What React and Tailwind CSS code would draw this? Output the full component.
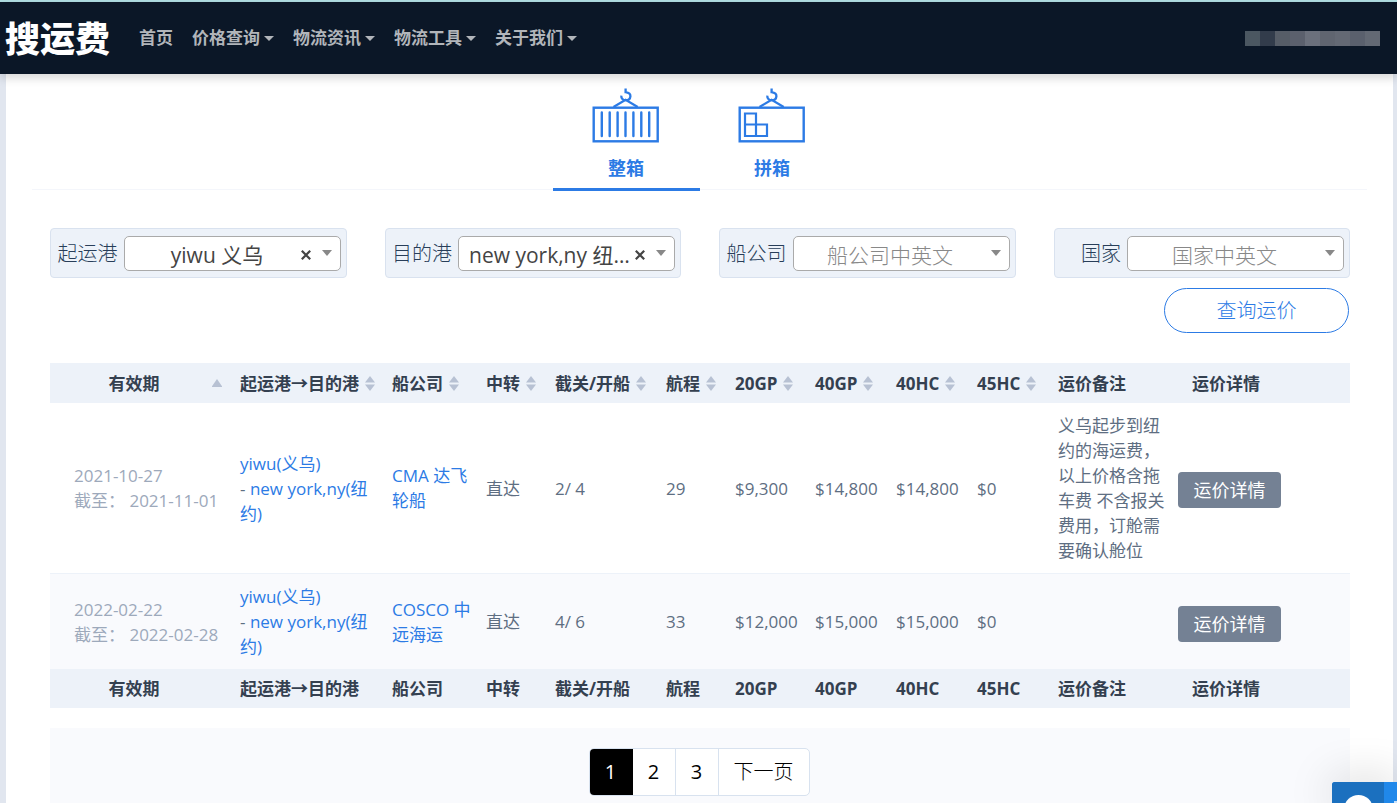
import React, { useState } from "react";

const navItems = [
  { label: "首页", menu: false },
  { label: "价格查询", menu: true },
  { label: "物流资讯", menu: true },
  { label: "物流工具", menu: true },
  { label: "关于我们", menu: true },
];

const columns = [
  { label: "有效期", width: "w-[184px]", sort: "up" },
  { label: "起运港→目的港", width: "w-[152px]", sort: "both" },
  { label: "船公司", width: "w-[94px]", sort: "both" },
  { label: "中转", width: "w-[69px]", sort: "both" },
  { label: "截关/开船", width: "w-[111px]", sort: "both" },
  { label: "航程", width: "w-[69px]", sort: "both" },
  { label: "20GP", width: "w-[80px]", sort: "both" },
  { label: "40GP", width: "w-[81px]", sort: "both" },
  { label: "40HC", width: "w-[81px]", sort: "both" },
  { label: "45HC", width: "w-[81px]", sort: "both" },
  { label: "运价备注", width: "w-[120px]", sort: null },
  { label: "运价详情", width: "w-auto", sort: null },
];

const rates = [
  {
    from: "2021-10-27",
    to: "2021-11-01",
    carrier: "CMA 达飞轮船",
    transit: "直达",
    cutoff: "2/ 4",
    days: "29",
    prices: ["$9,300", "$14,800", "$14,800", "$0"],
    note: "义乌起步到纽约的海运费，以上价格含拖车费 不含报关费用，订舱需要确认舱位",
  },
  {
    from: "2022-02-22",
    to: "2022-02-28",
    carrier: "COSCO 中远海运",
    transit: "直达",
    cutoff: "4/ 6",
    days: "33",
    prices: ["$12,000", "$15,000", "$15,000", "$0"],
    note: "",
  },
];

function Hook() {
  return (
    <>
      <path d="M33.6 .6V4.2C36.600 4.600 38.500 6.200 38.400 8.300C38.200 10.800 36.200 12.200 33.600 12.200C31 12.200 29.100 10.400 29.300 7.600" strokeWidth="2.3" />
      <path d="M21.5 19L33.600 11.800L45.700 19" strokeWidth="2.2" />
    </>
  );
}

function FullContainerIcon() {
  return (
    <svg width="68" height="56" viewBox="0 0 68 56" fill="none" stroke="currentColor" aria-hidden="true">
      <Hook />
      <rect x="1.7" y="19.7" width="64" height="33.6" strokeWidth="2.4" />
      <path d="M9.8 24.500V48M17.700 24.500V48M25.600 24.500V48M33.500 24.500V48M41.400 24.500V48M49.300 24.500V48M57.200 24.500V48" strokeWidth="2.4" strokeLinecap="round" />
    </svg>
  );
}

function SharedContainerIcon() {
  return (
    <svg width="68" height="56" viewBox="0 0 68 56" fill="none" stroke="currentColor" aria-hidden="true">
      <Hook />
      <rect x="1.7" y="19.7" width="64" height="33.6" strokeWidth="2.4" />
      <path d="M7 25.500H18V36.500H29V48H7ZM7 36.500H18V48" strokeWidth="2.2" />
    </svg>
  );
}

function SortMark({ kind }) {
  return (
    <svg className="shrink-0 text-[#b7c1d3]" width="10" height="15" viewBox="0 0 10 15" fill="currentColor" aria-hidden="true">
      {kind === "up" ? (
        <path d="M5 3L10.5 11H-.5Z" />
      ) : (
        <>
          <path d="M5 0L10 6.5H0Z" />
          <path d="M0 8.5H10L5 15Z" />
        </>
      )}
    </svg>
  );
}

function Filter({ id, label, value, placeholder }) {
  const [current, setCurrent] = useState(value || "");
  return (
    <div className="flex h-[50px] items-center justify-end rounded-[4px] border border-[#d9e2ef] bg-[#edf2f9] px-[5px]">
      <label htmlFor={id} className="whitespace-nowrap pr-1.5 pt-0.5 text-xl font-light text-[#283e59]">{label}</label>
      <div className="flex h-[35px] w-[217px] items-center rounded-[5px] border border-[#aaa] bg-white pr-2">
        <select
          id={id}
          value={current}
          onChange={(e) => setCurrent(e.target.value)}
          className={
            current
              ? "h-full min-w-0 flex-1 appearance-none truncate bg-transparent pl-2.5 pt-1 text-center text-[21px] leading-7 text-[#444] outline-none"
              : "h-full min-w-0 flex-1 appearance-none truncate bg-transparent pl-2.5 pr-1 pt-1 text-center text-[21px] font-light leading-7 text-[#888] outline-none"
          }
        >
          <option value="">{placeholder}</option>
          {value && <option value={value}>{value}</option>}
        </select>
        {current && (
          <button type="button" aria-label="清除" onClick={() => setCurrent("")} className="flex h-6 w-3 shrink-0 items-center justify-center pt-1 text-[#444]">
            <svg width="10" height="10" viewBox="0 0 10 10" stroke="currentColor" strokeWidth="2.2" aria-hidden="true">
              <path d="M.8 .8L9.2 9.2M9.2 .8L.8 9.2" />
            </svg>
          </button>
        )}
        <svg className="ml-2.5 shrink-0 text-[#888]" width="10" height="6" viewBox="0 0 10 6" fill="currentColor" aria-hidden="true">
          <path d="M0 0H10L5 6Z" />
        </svg>
      </div>
    </div>
  );
}

function HeadCells({ sortable }) {
  return columns.map((c, i) => {
    const align = i === 0 ? "text-center" : "text-left";
    if (sortable && c.sort) {
      return (
        <th key={c.label} scope="col" className={`${c.width} ${i === 0 ? "pl-1.5 pr-3" : "px-1.5"} font-bold`}>
          <button type="button" className="flex w-full items-center gap-1.5 whitespace-nowrap text-left font-bold">
            <span className={i === 0 ? "flex-1 pl-1.5 text-center" : ""}>{c.label}</span>
            <SortMark kind={c.sort} />
          </button>
        </th>
      );
    }
    return (
      <th key={c.label} scope="col" className={`${c.width} whitespace-nowrap px-1.5 font-bold ${align}`}>
        <span className={i === 11 ? "pl-3.5" : i === 0 ? "pr-4" : ""}>{c.label}</span>
      </th>
    );
  });
}

const mosaic = ["bg-[#4b5761]", "bg-[#323c4b]", "bg-[#565d67]", "bg-[#5b606d]", "bg-[#6b707c]", "bg-[#606570]", "bg-[#646974]", "bg-[#5a606d]", "bg-[#636974]"];

export default function App() {
  const [page, setPage] = useState(1);
  return (
    <div className="flex min-h-screen flex-col border-t-2 border-[#b0dee2] bg-[#e1e6ef] font-['Open_Sans','Noto_Sans_CJK_SC',sans-serif]">
      <header className="relative z-10 flex h-[72px] items-center bg-[#0b1727] pl-[5px] pr-[17px] shadow-[0_4px_9px_rgba(0,0,0,0.16)]">
        <a href="#home" className="mr-[29px] whitespace-nowrap text-[35px] font-black leading-none text-white">搜运费</a>
        <nav className="flex flex-1 items-center gap-[19px] text-[17px] font-bold text-[#b1b5ba]">
          {navItems.map((n) => (
            <a key={n.label} href="#nav" className="flex items-center gap-1 whitespace-nowrap">
              {n.label}
              {n.menu && (
                <svg width="10" height="5" viewBox="0 0 10 5" fill="currentColor" aria-hidden="true">
                  <path d="M0 0H10L5 5Z" />
                </svg>
              )}
            </a>
          ))}
        </nav>
        <div className="flex">
          {mosaic.map((m) => (
            <span key={m} className={`h-[15px] w-[15px] ${m}`} />
          ))}
        </div>
      </header>

      <main className="ml-1.5 mr-1 flex flex-1 flex-col bg-white">
        <div className="mx-[26px] flex h-[116px] justify-center border-b border-[#f4f6fb] pr-0.5" role="tablist">
          <button type="button" role="tab" aria-selected="true" className="-mb-0.5 flex w-[147px] flex-col items-center border-b-3 border-[#2c7be5] pt-3.5 text-lg font-bold text-[#2c7be5]">
            <FullContainerIcon />
            <span className="mt-2.5">整箱</span>
          </button>
          <button type="button" role="tab" aria-selected="false" className="flex w-[145px] flex-col items-center pt-3.5 text-lg font-bold text-[#2c7be5]">
            <SharedContainerIcon />
            <span className="mt-2.5">拼箱</span>
          </button>
        </div>

        <div className="ml-11 mr-[43px] flex flex-1 flex-col">
          <form className="mt-[38px]" onSubmit={(e) => e.preventDefault()}>
            <div className="grid grid-cols-4 gap-x-[38px]">
              <Filter id="origin" label="起运港" value="yiwu 义乌" placeholder="起运港中英文" />
              <Filter id="destination" label="目的港" value="new york,ny 纽约" placeholder="目的港中英文" />
              <Filter id="carrier" label="船公司" placeholder="船公司中英文" />
              <Filter id="country" label="国家" placeholder="国家中英文" />
            </div>
            <div className="mr-px mt-2.5 flex justify-end">
              <button type="submit" className="h-[45px] w-[185px] rounded-full border border-[#2c7be5] text-xl font-light text-[#2c7be5]">查询运价</button>
            </div>
          </form>

          <table className="mt-[30px] w-full table-fixed text-[17px] leading-[25px] text-[#5e6e82]">
            <thead className="bg-[#edf2f9] text-[#344050]">
              <tr className="h-10"><HeadCells sortable /></tr>
            </thead>
            <tbody>
              {rates.map((r, i) => (
                <tr key={r.from} className={i === 0 ? "border-b border-[#edf2f9]" : "bg-[#f9fafd]"}>
                  <td className="whitespace-nowrap py-2.5 pl-6 text-[#9da9bb]">
                    {r.from}
                    <br />
                    截至： {r.to}
                  </td>
                  <td className="px-1.5 py-2.5">
                    <a href="#origin-port" className="text-[#2c7be5]">yiwu(义乌)</a>
                    <br />
                    - <a href="#destination-port" className="text-[#2c7be5]">new york,ny(纽约)</a>
                  </td>
                  <td className="py-2.5 pl-1.5">
                    <a href="#carrier-detail" className="text-[#2c7be5]">{r.carrier}</a>
                  </td>
                  <td className="px-1.5 py-2.5">{r.transit}</td>
                  <td className="px-1.5 py-2.5">{r.cutoff}</td>
                  <td className="px-1.5 py-2.5">{r.days}</td>
                  {r.prices.map((p, k) => (
                    <td key={k} className="px-1.5 py-2.5">{p}</td>
                  ))}
                  <td className="px-1.5 py-2.5">{r.note}</td>
                  <td className="px-1.5 py-2.5">
                    <button type="button" className="mt-1 h-9 w-[103px] rounded-[4px] bg-[#748194] text-lg text-white">运价详情</button>
                  </td>
                </tr>
              ))}
            </tbody>
            <tfoot className="bg-[#edf2f9] text-[#344050]">
              <tr className="h-[39px]"><HeadCells sortable={false} /></tr>
            </tfoot>
          </table>

          <div className="mt-5 flex flex-1 justify-center bg-[#f9fafd] pb-1.5 pr-0.5 pt-5">
            <nav aria-label="分页" className="flex h-12 overflow-hidden rounded-[5px] border border-[#d8e2ef] bg-white text-xl text-black">
              {[1, 2, 3].map((n) => (
                <button
                  key={n}
                  type="button"
                  onClick={() => setPage(n)}
                  className={n === page ? "-my-px -ml-px w-11 bg-black text-white" : "w-[43px] border-r border-[#d8e2ef]"}
                >
                  {n}
                </button>
              ))}
              <button type="button" className="w-[90px] font-light">下一页</button>
            </nav>
          </div>
        </div>
      </main>

      <aside className="fixed bottom-0 right-0 z-20 flex h-[21px] w-[65px] overflow-visible rounded-tl-[3px] bg-[#2088ea] shadow-[0_0_45px_rgba(0,0,0,0.22)]">
        <svg className="rounded-tl-[3px] bg-[#1b70bf]" width="52" height="21" viewBox="0 0 52 21" fill="#fff" aria-hidden="true">
          <ellipse cx="26.500" cy="26" rx="14" ry="13" />
        </svg>
        <svg width="13" height="21" viewBox="0 0 13 21" stroke="#fff" strokeWidth="1.500" aria-hidden="true">
          <path d="M10 20H13" />
        </svg>
      </aside>
    </div>
  );
}
